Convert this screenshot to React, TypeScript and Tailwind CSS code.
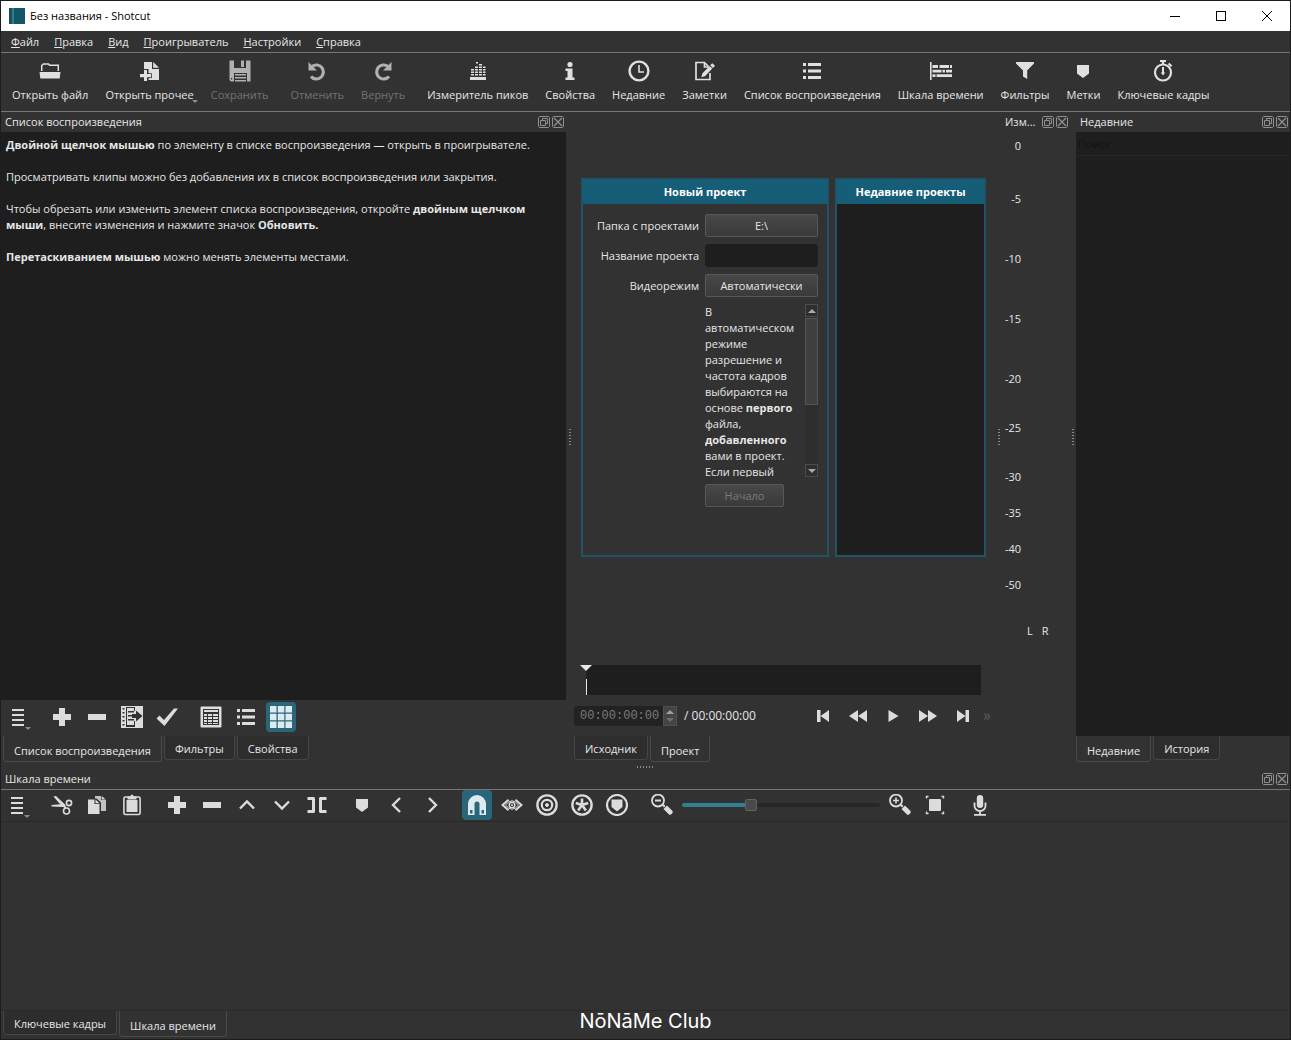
import { ReactNode, useState } from 'react';

interface IconProps {
  children: ReactNode;
  className?: string;
}

function Icon({ children, className = '' }: IconProps) {
  return (
    <svg className={`w-[22px] h-[22px] shrink-0 ${className}`} viewBox="0 0 22 22" fill="currentColor" aria-hidden="true">
      {children}
    </svg>
  );
}

const icons: Record<string, ReactNode> = {
  open: (
    <>
      <path d="M2.7 11V5.500L4.500 4h5l1 1.200h8.800V11" fill="none" stroke="currentColor" strokeWidth="1.500" />
      <path d="M.5 12h21l-.8 6.500H1.300z" />
    </>
  ),
  openOther: (
    <>
      <path d="M5 2h8v7h7v11H5z" />
      <path d="M14.200 2 20 7.800h-5.800z" />
      <path d="M4.500 9h5v4.300h3.300v5H9.500V20H13v2H4.500z" fill="#323232" />
      <path d="M13 18.500h7V20h-9.500v-1.500z" />
      <path d="M5 10h3v4h4v3.200H8V21H5v-3.800H1V14h4z" />
    </>
  ),
  save: (
    <path
      fillRule="evenodd"
      d="M.5.5H5V8h12V.5h4.500v21H2L.5 20zM12 .5h3V7h-3zM5 13v8.500h13V13zM6 14h11v1.500H6zM6 17h11v1.500H6zM6 20h11v1.500H6zM2 18h1.200v1.500H2z"
    />
  ),
  undo: (
    <>
      <path d="M6 6.500A7 7 0 1 1 5 16.500" fill="none" stroke="currentColor" strokeWidth="3.200" />
      <path d="M2.500 2v8.500H11z" />
    </>
  ),
  redo: (
    <>
      <path d="M16 6.500A7 7 0 1 0 17 16.500" fill="none" stroke="currentColor" strokeWidth="3.200" />
      <path d="M19.500 2v8.500H11z" />
    </>
  ),
  peaks: (
    <path d="M3 17h16v3H3zM4 14h3v1.500H4zM4 11.500h3V13H4zM4 9h3v1.500H4zM8 14h3v1.500H8zM8 11.500h3V13H8zM8 9h3v1.500H8zM8 6.500h3V8H8zM12 14h3v1.500h-3zM12 11.500h3V13h-3zM12 9h3v1.500h-3zM12 6.500h3V8h-3zM16 14h2.500v1.500H16zM16 11.500h2.500V13H16zM16 9h2.500v1.500H16zM16 6.500h2.500V8H16zM12 4h3v1.500h-3zM9 2h2v1.500H9z" />
  ),
  info: (
    <>
      <circle cx="11" cy="4.500" r="2.600" />
      <path d="M6.500 8.500h7v9h2V20h-9v-2.500h2V11h-2z" />
    </>
  ),
  clock: (
    <g fill="none" stroke="currentColor">
      <circle cx="11" cy="11" r="9.400" strokeWidth="2.400" />
      <path d="M11 5v7h5" strokeWidth="1.600" />
    </g>
  ),
  notes: (
    <>
      <path d="M10 2.500H2v17h14V13M2 2.500h8.500l4 4M10.500 2.500v4.500h4" fill="none" stroke="currentColor" strokeWidth="1.700" />
      <path d="m18.300 3.200 2.700 2.500-2 2.200-2.800-2.600zM15.500 6l2.800 2.600-7.300 7.600-3.600 1 .9-3.700z" />
    </>
  ),
  list: <path d="M2 3h3v3H2zM7 3h13v3H7zM2 9.500h3v3H2zM7 9.500h13v3H7zM2 16h3v3H2zM7 16h13v3H7z" />,
  timeline: (
    <path d="M0 2h1.600v18H0zM2.500 5h5.500v3H2.500zM9.500 5H19v3H9.500zM20 5h2v3h-2zM2.500 9.800h9v2.800h-9zM12.500 9.800h2.500v2.800h-2.500zM16 9.800h6v2.800h-6zM2.500 14.300h3v2.800h-3zM6.500 14.300H22v2.800H6.500z" />
  ),
  filter: <path d="M2 2h18v1.500L13.200 10.500V19L9 16.500v-6L2 3.500z" />,
  marker: <path d="M5 5h12v8.500L11 18l-6-4.500z" />,
  stopwatch: (
    <>
      <circle cx="11" cy="12.500" r="8" fill="none" stroke="currentColor" strokeWidth="2.200" />
      <path d="M8 0h6v2h-1.800v2.500H9.800V2H8zM17.300 2.800l3 2.800-1.400 1.400-3-2.800zM10 7h2v5.500h1.300L11 15.500l-2.300-3H10z" />
    </>
  ),
  menu: <path d="M5 3h12v2H5zM5 8h12v2H5zM5 13h12v2H5zM5 18h12v2H5z" />,
  plus: <path d="M8 2h6v6h6v6h-6v6H8v-6H2V8h6z" />,
  minus: <path d="M2 8h18v6H2z" />,
  update: (
    <>
      <path d="M0 0h22v22H0z" />
      <path
        d="M1.500 2h2v1.500h-2zM1.500 6h2v1.500h-2zM1.500 10h2v1.500h-2zM1.500 14h2v1.500h-2zM1.500 18h2v1.500h-2z M5 1h9v4h-1V2H6v17h7v-4h1v6H5zM7 5h6v1.500H7zM7 9h5v1.500H7zM7 13h6v1.500H7zM11 8h4V4.500l6.500 5.500L15 15.500V12h-4z"
        fill="#323232"
      />
    </>
  ),
  check: <path d="M.5 12.500 3.500 9.500l4.500 4.500L18 2.500h4L8.500 20z" />,
  details: (
    <>
      <rect x=".5" y=".5" width="21" height="21" rx="1" />
      <path d="M3 3h16v16H3z" fill="#323232" />
      <path d="M4 4h14v2H4zM4 8h3v2H4zM8 8h4v2H8zM13 8h5v2h-5zM4 11h3v2H4zM8 11h4v2H8zM13 11h5v2h-5zM4 14h3v2H4zM8 14h4v2H8zM13 14h5v2h-5zM4 17h3v1H4zM8 17h4v1H8zM13 17h5v1h-5z" />
    </>
  ),
  grid: <path d="M0 0h6.500v6.500H0zM7.800 0h6.500v6.500H7.800zM15.500 0H22v6.500h-6.500zM0 7.800h6.500v6.500H0zM7.800 7.800h6.500v6.500H7.800zM15.500 7.800H22v6.500h-6.500zM0 15.500h6.500V22H0zM7.800 15.500h6.500V22H7.800zM15.500 15.500H22V22h-6.500z" />,
  cut: (
    <>
      <path d="M2.500 2.500 5 2l9 8.500 1 2-2 .5-5-4zM.5 11l11.500-1 2.500 1.500-2 1.500L.5 12.500z" />
      <circle cx="18" cy="9" r="2.600" fill="none" stroke="currentColor" strokeWidth="1.600" />
      <circle cx="15.500" cy="17" r="3" fill="none" stroke="currentColor" strokeWidth="1.600" />
      <path d="M13 12.500 15 14" stroke="currentColor" strokeWidth="1.600" />
    </>
  ),
  copy: (
    <>
      <path d="M9 2h6v4h5v11H9z" opacity=".85" />
      <path d="m15.700 2 4 3.500h-4z" />
      <path d="M1 4.500h9.500l4.500 4v13H1z" fill="#323232" />
      <path d="M2 5.500h6.500V10h5v10H2zM9.500 5.500l4 3.700h-4z" />
    </>
  ),
  paste: (
    <>
      <rect x="2.900" y="3" width="16.200" height="17.500" rx="1.500" fill="none" stroke="currentColor" strokeWidth="1.600" />
      <path d="M5.500 6h11v12h-11zM6.500 2.500H9L10.200.8h1.600L13 2.500h2.500v3h-9z" />
    </>
  ),
  up: <path d="m4 14.500 7-7 7 7" fill="none" stroke="currentColor" strokeWidth="2.400" />,
  down: <path d="m4 7.500 7 7 7-7" fill="none" stroke="currentColor" strokeWidth="2.400" />,
  split: <path d="M1.500 4.500h7M1.500 17.500h7M7.500 4v14M20.500 4.500h-7M20.500 17.500h-7M14.500 4v14" fill="none" stroke="currentColor" strokeWidth="3" />,
  left: <path d="m14 4-7 7 7 7" fill="none" stroke="currentColor" strokeWidth="2.400" />,
  right: <path d="m8 4 7 7-7 7" fill="none" stroke="currentColor" strokeWidth="2.400" />,
  magnet: (
    <path
      fillRule="evenodd"
      d="M2 21V10a9 9 0 0 1 18 0v11h-6.500V10a2.500 2.500 0 0 0-5 0v11zM4 16v3.500h2.500V16zM15.500 16v3.500H18V16z"
    />
  ),
  eye: (
    <>
      <path d="M7.500 5.800 1.500 11l6 5.200M14.500 5.800 20.500 11l-6 5.200" fill="none" stroke="currentColor" strokeWidth="1.900" />
      <path d="M4.500 11q6.500-8.500 13 0-6.500 8.500-13 0z" fill="none" stroke="currentColor" strokeWidth="1" />
      <circle cx="11" cy="11" r="2.800" fill="none" stroke="currentColor" strokeWidth="1.500" />
      <circle cx="11" cy="11" r="1" />
    </>
  ),
  ripple: (
    <g fill="none" stroke="currentColor">
      <circle cx="11" cy="11" r="9.600" strokeWidth="2.400" />
      <circle cx="11" cy="11" r="5.200" strokeWidth="2.200" />
      <circle cx="11" cy="11" r="1.500" fill="currentColor" />
    </g>
  ),
  rippleAll: (
    <g fill="none" stroke="currentColor">
      <circle cx="11" cy="11" r="9.600" strokeWidth="2.400" />
      <path d="M11 11V4.500M11 11 4.800 9M11 11l6.200-2M11 11l-3.900 5.400M11 11l3.900 5.400" strokeWidth="2.600" />
    </g>
  ),
  rippleMarkers: (
    <>
      <circle cx="11" cy="11" r="10" fill="none" stroke="currentColor" strokeWidth="2.200" />
      <path d="M5.500 5.500h11V13L11 17.500 5.500 13z" />
    </>
  ),
  zoomOut: (
    <>
      <circle cx="7" cy="6.500" r="6" fill="none" stroke="currentColor" strokeWidth="1.800" />
      <path d="M4 5.600h6v1.800H4zM11 11.500l1.500-1.500 2 2-1.500 1.500zM12.500 15l3.500-3.500 5.500 5.500q1 3-3 4z" />
    </>
  ),
  zoomIn: (
    <>
      <circle cx="7" cy="6.500" r="6" fill="none" stroke="currentColor" strokeWidth="1.800" />
      <path d="M4 5.700h2.200V3.500h1.600v2.200H10v1.600H7.800v2.200H6.200V7.300H4zM11 11.500l1.500-1.500 2 2-1.500 1.500zM12.500 15l3.500-3.500 5.500 5.500q1 3-3 4z" />
    </>
  ),
  fit: (
    <>
      <rect x="5" y="5" width="12" height="12" rx="1" />
      <path d="M2.500 4.500v-2h2M17.500 2.500h2v2M19.500 17.500v2h-2M4.500 19.500h-2v-2" fill="none" stroke="currentColor" strokeWidth="1.400" />
    </>
  ),
  mic: (
    <>
      <rect x="7.800" y="1" width="6.400" height="13" rx="3.200" />
      <path d="M5.500 8.500V12a5.500 5 0 0 0 11 0V8.500M11 17v4M5 20.800h12" fill="none" stroke="currentColor" strokeWidth="1.800" />
    </>
  ),
  skipBack: <path d="M5 5h3.500v12H5zM17 5v12l-8.500-6z" />,
  rewind: <path d="M11 5v12l-9-6zM20 5v12l-9-6z" />,
  play: <path d="M6.500 5v12l10-6z" />,
  forward: <path d="M2 5v12l9-6zM11 5v12l9-6z" />,
  skipForward: <path d="M17 5h-3.500v12H17zM5 5v12l8.500-6z" />,
};

interface ToolProps {
  icon: string;
  label: string;
  active?: boolean;
  arrow?: boolean;
}

function Tool({ icon, label, active, arrow }: ToolProps) {
  return (
    <button
      aria-label={label}
      className={`relative w-[30px] h-[30px] shrink-0 flex items-center justify-center rounded-sm ${
        active ? 'bg-[#2b6579] text-[#dcebf0]' : 'text-[#dcdcdc] hover:bg-[#444444]'
      }`}
    >
      <Icon>{icons[icon]}</Icon>
      {arrow && (
        <span className="absolute right-0.5 bottom-0.5 border-x-3 border-t-3 border-x-transparent border-t-[#8c8c8c]" />
      )}
    </button>
  );
}

interface BarButtonProps {
  icon: string;
  label: string;
  disabled?: boolean;
  arrow?: boolean;
}

function BarButton({ icon, label, disabled, arrow }: BarButtonProps) {
  return (
    <button
      disabled={disabled}
      className={`relative flex flex-col items-center gap-[5px] whitespace-nowrap ${disabled ? 'text-[#727272]' : ''}`}
    >
      <Icon className={disabled ? 'text-[#b0b0b0]' : 'text-[#e0e0e0]'}>{icons[icon]}</Icon>
      {label}
      {arrow && (
        <span className="absolute -right-1 bottom-0 border-x-3 border-t-3 border-x-transparent border-t-[#8c8c8c]" />
      )}
    </button>
  );
}

function DockTitle({ title }: { title: string }) {
  return (
    <div className="h-5 pl-1 pr-0.5 flex items-center justify-between whitespace-nowrap">
      <h2>{title}</h2>
      <div className="flex gap-0.5 text-[#8f8f8f]">
        <button aria-label="Открепить" className="w-3 h-3">
          <svg viewBox="0 0 12 12" fill="none" stroke="currentColor" aria-hidden="true">
            <path d="M1.500.5h9l1 1v9l-1 1h-9l-1-1v-9z" />
            <path d="M4.500 2.500h5v5h-2M2.500 4.500h5v5h-5zM4.500 2.500v2" />
          </svg>
        </button>
        <button aria-label="Закрыть" className="w-3 h-3">
          <svg viewBox="0 0 12 12" fill="none" stroke="currentColor" aria-hidden="true">
            <path d="M1.500.5h9l1 1v9l-1 1h-9l-1-1v-9z" />
            <path d="m2 2 8 8M10 2l-8 8" strokeWidth="1.300" />
          </svg>
        </button>
      </div>
    </div>
  );
}

interface TabsProps {
  tabs: string[];
  defaultTab: string;
  className?: string;
}

function Tabs({ tabs, defaultTab, className = '' }: TabsProps) {
  const [activeTab, setActiveTab] = useState(defaultTab);

  return (
    <div role="tablist" className={`h-7 flex items-start gap-0.5 ${className}`}>
      {tabs.map((tab) => (
        <button
          key={tab}
          role="tab"
          aria-selected={activeTab === tab}
          onClick={() => setActiveTab(tab)}
          className={`px-2.5 border border-t-0 rounded-b-sm whitespace-nowrap ${
            activeTab === tab ? 'h-[26px] pt-1 border-[#4a4a4a]' : 'h-6 pt-0.5 border-[#454545] bg-[#2d2d2d]'
          }`}
        >
          {tab}
        </button>
      ))}
    </div>
  );
}

function Splitter() {
  return (
    <div className="flex items-center justify-center">
      <div className="w-0.5 h-[18px] bg-[repeating-linear-gradient(to_bottom,#8a8a8a_0_1px,transparent_1px_3px)]" />
    </div>
  );
}

const menus = ['Файл', 'Правка', 'Вид', 'Проигрыватель', 'Настройки', 'Справка'];

const levels = [
  { value: '0', gap: 'mt-1.5' },
  { value: '-5', gap: 'mt-[37px]' },
  { value: '-10', gap: 'mt-11' },
  { value: '-15', gap: 'mt-11' },
  { value: '-20', gap: 'mt-11' },
  { value: '-25', gap: 'mt-[33px]' },
  { value: '-30', gap: 'mt-[33px]' },
  { value: '-35', gap: 'mt-5' },
  { value: '-40', gap: 'mt-5' },
  { value: '-50', gap: 'mt-5' },
];

const fieldButton =
  'h-[23px] rounded-xs border border-[#585858] bg-linear-to-b from-[#484848] to-[#3a3a3a] text-center';

const panelTitle = 'h-6 flex items-center justify-center bg-[#165d78] font-bold text-white';

function NewProject() {
  return (
    <section className="min-w-0 border-2 border-[#1f5468]">
      <h2 className={panelTitle}>Новый проект</h2>
      <div className="pt-2.5 pr-[9px] grid grid-cols-[1fr_113px] gap-x-1.5 gap-y-[7px] items-center text-right">
        <label htmlFor="folder">Папка с проектами</label>
        <button id="folder" className={fieldButton}>E:\</button>
        <label htmlFor="name">Название проекта</label>
        <input id="name" className="h-[23px] w-full px-1 rounded-sm bg-[#1e1e1e] outline-none" />
        <label htmlFor="mode">Видеорежим</label>
        <button id="mode" className={fieldButton}>Автоматически</button>
        <div className="col-start-2 h-[173px] flex justify-between text-left overflow-hidden">
          <p className="w-24">
            В автоматическом режиме разрешение и частота кадров выбираются на основе <b>первого</b> файла,{' '}
            <b>добавленного</b> вами в проект. Если первый
          </p>
          <div className="w-[13px] flex flex-col bg-[#2e2e2e]">
            <div className="h-[13px] flex items-center justify-center border border-[#4c4c4c]">
              <span className="border-x-4 border-b-4 border-x-transparent border-b-[#a8a8a8]" />
            </div>
            <div className="mt-px h-[87px] border border-[#555555] bg-[#404040]" />
            <div className="mt-auto h-[13px] flex items-center justify-center border border-[#4c4c4c]">
              <span className="border-x-4 border-t-4 border-x-transparent border-t-[#a8a8a8]" />
            </div>
          </div>
        </div>
        <button disabled className={`${fieldButton} col-start-2 w-[79px] text-[#7c7c7c]`}>Начало</button>
      </div>
    </section>
  );
}

function Player() {
  return (
    <div className="flex flex-col min-w-0">
      <div className="flex-1 pt-[66px] pl-[7px] pr-[9px]">
        <div className="grid grid-cols-[248fr_151fr] gap-1.5 h-[379px]">
          <NewProject />
          <section className="min-w-0 border-2 border-[#1f5468] bg-[#1e1e1e]">
            <h2 className={panelTitle}>Недавние проекты</h2>
          </section>
        </div>
      </div>

      <div className="relative h-[30px] ml-3 mr-3.5 bg-[#1e1e1e]">
        <span className="absolute -left-1.5 top-0 border-x-6 border-t-6 border-x-transparent border-t-[#e8e8e8]" />
        <span className="absolute left-0 bottom-0 w-px h-4 bg-[#e8e8e8]" />
      </div>

      <div className="h-[41px] flex items-center justify-between">
        <div className="flex items-center">
          <input
            aria-label="Текущая позиция"
            defaultValue="00:00:00:00"
            className="w-[89px] h-5 pl-1.5 rounded-l-sm bg-[#222222] text-xs text-[#7b7b7b] font-['Liberation_Mono',monospace] outline-none"
          />
          <div className="w-3.5 h-5 flex flex-col items-center justify-center gap-1 border border-[#505050] bg-[#444444]">
            <span className="border-x-4 border-b-4 border-x-transparent border-b-[#a0a0a0]" />
            <span className="border-x-4 border-t-4 border-x-transparent border-t-[#6e6e6e]" />
          </div>
          <span className="ml-[7px] text-xs">/ 00:00:00:00</span>
        </div>
        <div className="flex gap-[5px] items-center text-[#c8c8c8]">
          <Tool icon="skipBack" label="В начало" />
          <Tool icon="rewind" label="Назад" />
          <Tool icon="play" label="Воспроизвести" />
          <Tool icon="forward" label="Вперёд" />
          <Tool icon="skipForward" label="В конец" />
          <span className="w-3 pb-0.5 text-base text-[#5c5c5c]">»</span>
        </div>
      </div>
      <Tabs tabs={['Исходник', 'Проект']} defaultTab="Проект" />
    </div>
  );
}

export default function App() {
  return (
    <div className="relative min-h-screen flex flex-col border border-[#1c1c1c] bg-[#323232] font-['Open_Sans',sans-serif] text-[11px] leading-4 text-[#e6e6e6]">
      {/* Title bar */}
      <header className="h-[30px] pl-2 flex items-center bg-white text-black">
        <svg className="w-4 h-4" viewBox="0 0 16 16" aria-hidden="true">
          <path d="M0 0h16v16H0z" fill="#115566" />
          <path d="M3.500 0h1v16h-1z" fill="#5f9cad" />
          <path d="M0 0h2v16H0z" fill="#1c4b5a" />
        </svg>
        <h1 className="ml-[5px] flex-1">Без названия - Shotcut</h1>
        <button aria-label="Свернуть" className="w-[46px] h-full flex items-center justify-center">
          <span className="w-2.5 h-px bg-black" />
        </button>
        <button aria-label="Развернуть" className="w-[46px] h-full flex items-center justify-center">
          <span className="w-2.5 h-2.5 border border-black" />
        </button>
        <button aria-label="Закрыть окно" className="w-[46px] h-full flex items-center justify-center">
          <svg className="w-2.5 h-2.5" viewBox="0 0 10 10" stroke="black" aria-hidden="true">
            <path d="m0 0 10 10M10 0 0 10" />
          </svg>
        </button>
      </header>

      {/* Menu */}
      <nav className="h-[21px] pl-2.5 flex items-center gap-[15px]">
        {menus.map((item) => (
          <button key={item} className="first-letter:underline">
            {item}
          </button>
        ))}
      </nav>

      {/* Main toolbar */}
      <div className="h-[60px] pl-[11px] pb-px flex items-center gap-[17px] border-y border-[#757575]">
        <BarButton icon="open" label="Открыть файл" />
        <BarButton icon="openOther" label="Открыть прочее" arrow />
        <BarButton icon="save" label="Сохранить" disabled />
        <span className="-mr-3" />
        <BarButton icon="undo" label="Отменить" disabled />
        <BarButton icon="redo" label="Вернуть" disabled />
        <span className="-mr-3" />
        <BarButton icon="peaks" label="Измеритель пиков" />
        <BarButton icon="info" label="Свойства" />
        <BarButton icon="clock" label="Недавние" />
        <BarButton icon="notes" label="Заметки" />
        <BarButton icon="list" label="Список воспроизведения" />
        <BarButton icon="timeline" label="Шкала времени" />
        <BarButton icon="filter" label="Фильтры" />
        <BarButton icon="marker" label="Метки" />
        <BarButton icon="stopwatch" label="Ключевые кадры" />
      </div>

      {/* Docks */}
      <main className="flex-1 grid grid-cols-[565fr_8px_421fr_8px_67px_6px_214fr]">
        <section className="flex flex-col min-w-0">
          <DockTitle title="Список воспроизведения" />
          <div className="flex-1 pt-[5px] px-[5px] space-y-4 bg-[#1e1e1e]">
            <p>
              <b>Двойной щелчок мышью</b> по элементу в списке воспроизведения — открыть в проигрывателе.
            </p>
            <p>Просматривать клипы можно без добавления их в список воспроизведения или закрытия.</p>
            <p>
              Чтобы обрезать или изменить элемент списка воспроизведения, откройте <b>двойным щелчком</b>
              <br />
              <b>мыши</b>, внесите изменения и нажмите значок <b>Обновить.</b>
            </p>
            <p>
              <b>Перетаскиванием мышью</b> можно менять элементы местами.
            </p>
          </div>
          <div className="h-9 pl-0.5 pb-0.5 flex items-center gap-3.5">
            <Tool icon="menu" label="Меню" arrow />
            <div className="flex gap-[5px]">
              <Tool icon="plus" label="Добавить" />
              <Tool icon="minus" label="Удалить" />
              <Tool icon="update" label="Обновить" />
              <Tool icon="check" label="Применить" />
            </div>
            <div className="flex gap-[5px]">
              <Tool icon="details" label="Подробно" />
              <Tool icon="list" label="Список" />
              <Tool icon="grid" label="Значки" active />
            </div>
          </div>
          <Tabs
            tabs={['Список воспроизведения', 'Фильтры', 'Свойства']}
            defaultTab="Список воспроизведения"
            className="pl-0.5"
          />
        </section>

        <Splitter />
        <Player />
        <Splitter />

        <section>
          <div className="-ml-0.5">
            <DockTitle title="Изм..." />
          </div>
          <ul className="w-[18px] text-right">
            {levels.map((level) => (
              <li key={level.value} className={level.gap}>
                {level.value}
              </li>
            ))}
          </ul>
          <div className="mt-[30px] pl-6 flex gap-[9px]">
            <span>L</span>
            <span>R</span>
          </div>
        </section>

        <Splitter />

        <section className="flex flex-col min-w-0">
          <DockTitle title="Недавние" />
          <div className="flex-1 bg-[#1e1e1e]">
            <input
              type="search"
              aria-label="Поиск"
              placeholder="Поиск"
              className="block w-full h-6 px-0.5 border-b border-[#262626] text-[#e0e0e0] placeholder:text-[#121212] outline-none"
            />
          </div>
          <Tabs tabs={['Недавние', 'История']} defaultTab="Недавние" />
        </section>
      </main>

      <div className="h-[5px] flex items-center justify-center">
        <div className="w-[18px] h-0.5 bg-[repeating-linear-gradient(to_right,#8a8a8a_0_1px,transparent_1px_3px)]" />
      </div>

      {/* Timeline */}
      <section>
        <DockTitle title="Шкала времени" />
        <div className="h-[33px] pl-px pb-px flex items-center gap-[15px] border-t border-b border-t-[#757575] border-b-[#282828]">
          <Tool icon="menu" label="Меню шкалы" arrow />
          <div className="flex gap-[5px]">
            <Tool icon="cut" label="Вырезать" />
            <Tool icon="copy" label="Копировать" />
            <Tool icon="paste" label="Вставить" />
          </div>
          <div className="flex gap-[5px]">
            <Tool icon="plus" label="Добавить в конец" />
            <Tool icon="minus" label="Удалить со сдвигом" />
            <Tool icon="up" label="Поднять" />
            <Tool icon="down" label="Перезаписать" />
            <Tool icon="split" label="Разрезать" />
          </div>
          <div className="flex gap-[5px]">
            <Tool icon="marker" label="Метка" />
            <Tool icon="left" label="Предыдущая метка" />
            <Tool icon="right" label="Следующая метка" />
          </div>
          <div className="flex gap-[5px]">
            <Tool icon="magnet" label="Привязка" active />
            <Tool icon="eye" label="Прокрутка при перемещении" />
            <Tool icon="ripple" label="Сдвиг" />
            <Tool icon="rippleAll" label="Сдвиг всех дорожек" />
            <Tool icon="rippleMarkers" label="Сдвиг меток" />
          </div>
          <div className="flex items-center gap-[5px]">
            <Tool icon="zoomOut" label="Уменьшить" />
            <input
              type="range"
              aria-label="Масштаб"
              defaultValue={34}
              className="w-[198px] h-1 appearance-none rounded-full bg-[linear-gradient(to_right,#337f91_0_34%,#272727_34%)] [&::-webkit-slider-thumb]:appearance-none [&::-webkit-slider-thumb]:w-3 [&::-webkit-slider-thumb]:h-3 [&::-webkit-slider-thumb]:rounded-xs [&::-webkit-slider-thumb]:border [&::-webkit-slider-thumb]:border-[#626262] [&::-webkit-slider-thumb]:bg-[#4a4a4a]"
            />
            <Tool icon="zoomIn" label="Увеличить" />
            <Tool icon="fit" label="Вписать" />
          </div>
          <Tool icon="mic" label="Запись звука" />
        </div>
        <div className="h-[189px] border-b border-[#292929]" />
        <Tabs tabs={['Ключевые кадры', 'Шкала времени']} defaultTab="Шкала времени" className="pl-0.5" />
      </section>

      <p className="absolute inset-x-0 bottom-1.5 text-center font-['Inter',sans-serif] text-xl leading-6 text-white pointer-events-none">
        NōNāMe Club
      </p>
    </div>
  );
}
